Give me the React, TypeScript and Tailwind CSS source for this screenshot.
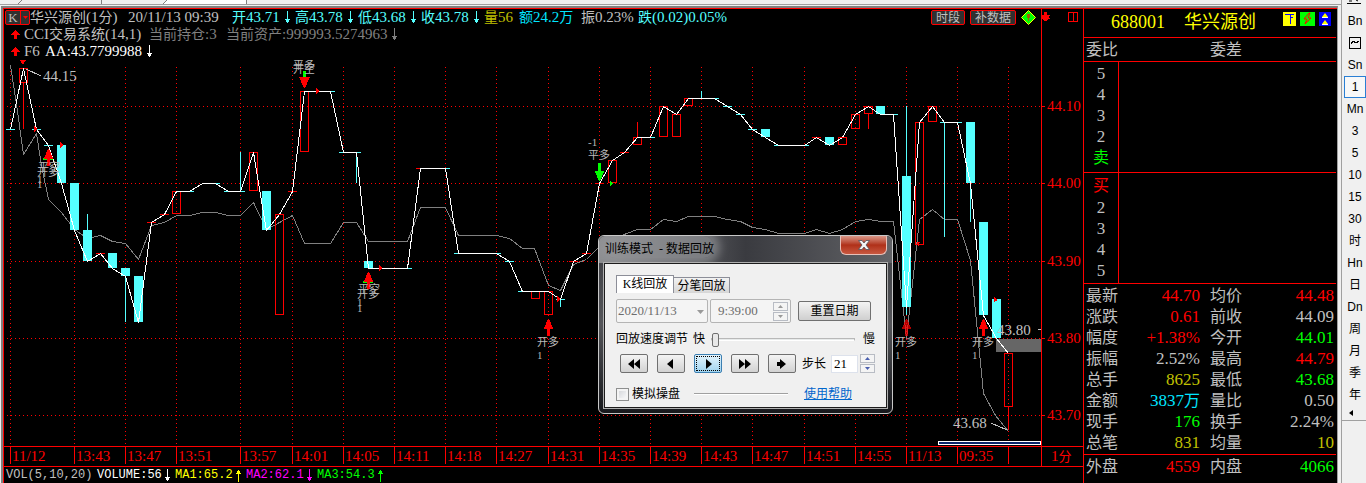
import React, { useState } from 'react';

const TIME_TICKS: [number, string][] = [
    [0, '11/12'], [5, '13:43'], [9, '13:47'], [13, '13:51'], [18, '13:57'],
    [22, '14:01'], [26, '14:05'], [30, '14:11'], [34, '14:18'], [38, '14:27'],
    [42, '14:31'], [46, '14:35'], [50, '14:39'], [54, '14:43'], [58, '14:47'],
    [62, '14:51'], [66, '14:55'], [70, '11/13'], [74, '09:35'], [78, ''],
];

const PRICE_TICKS: [number, string][] = [
    [106, '44.10'], [183, '44.00'], [261, '43.90'], [338, '43.80'], [415, '43.70'],
];

// close line, one y per bar
const CLOSES = [
    129, 68, 129, 145, 183, 230, 261, 253, 268, 276, 322, 222, 214, 191, 191, 183, 183, 191, 191, 152,
    230, 214, 191, 91, 91, 91, 152, 152, 268, 268, 268, 268, 168, 168, 168, 253, 253, 253, 253, 261,
    291, 291, 291, 299, 261, 253, 183, 160, 152, 137, 137, 106, 114, 98, 98, 98, 106, 114, 129, 137,
    145, 145, 145, 137, 145, 137, 114, 106, 114, 114, 307, 122, 106, 122, 122, 183, 315, 338, 353,
];

const AVERAGE: [number, number][] = [
    [10, 65], [16, 104], [23, 154], [36, 133], [41, 165], [48, 199], [61, 212], [74, 229], [87, 238], [100, 235],
    [112, 241], [125, 243], [138, 259], [151, 225], [164, 222], [176, 215], [189, 215], [202, 212], [215, 212],
    [228, 215], [240, 215], [253, 202], [266, 229], [279, 222], [292, 215], [304, 243], [330, 243], [343, 222],
    [356, 222], [368, 241], [407, 241], [420, 207], [445, 207], [458, 235], [496, 235], [509, 238], [522, 248],
    [534, 248], [548, 285], [560, 290], [573, 264], [586, 259], [599, 246], [612, 240], [626, 233], [637, 229],
    [650, 229], [663, 219], [676, 221], [688, 216], [714, 216], [727, 219], [740, 221], [752, 227], [765, 229],
    [778, 233], [804, 233], [816, 229], [829, 233], [842, 229], [855, 221], [868, 219], [881, 221], [893, 221],
    [906, 338], [919, 219], [932, 209], [944, 219], [957, 219], [970, 260], [983, 393], [995, 415], [1008, 431],
];

// bar index, body top, body bottom, wick top, wick bottom
type Bar = [number, number, number, number, number];

const UP_BARS: Bar[] = [
    [1, 68, 82, 68, 129], [13, 191, 213, 191, 213], [19, 152, 190, 152, 190], [21, 214, 314, 214, 314],
    [23, 91, 151, 91, 151], [41, 291, 298, 291, 298], [42, 291, 314, 291, 314], [47, 160, 182, 160, 182],
    [49, 137, 144, 122, 144], [51, 106, 136, 106, 136], [52, 114, 136, 114, 136], [53, 98, 105, 98, 105],
    [65, 137, 144, 137, 144], [66, 114, 128, 114, 128], [67, 106, 113, 106, 129], [71, 122, 244, 122, 244],
    [72, 106, 121, 106, 121], [78, 353, 406, 353, 430],
];

const DOWN_BARS: Bar[] = [
    [4, 145, 183, 145, 183], [5, 183, 230, 183, 230], [6, 230, 261, 214, 261], [8, 253, 268, 253, 268],
    [9, 268, 276, 268, 322], [10, 276, 322, 276, 322], [20, 191, 230, 191, 230], [28, 261, 268, 261, 268],
    [59, 129, 137, 129, 137], [64, 137, 145, 137, 145], [68, 106, 114, 106, 114], [70, 176, 307, 106, 315],
    [75, 122, 183, 122, 222], [76, 222, 315, 222, 315], [77, 299, 338, 299, 338],
];

const UP_DASHES: [number, number][] = [
    [7, 253], [11, 222], [12, 214], [22, 191], [32, 168], [44, 261], [45, 253], [46, 183], [48, 152], [63, 137],
];

const DOWN_DASHES: [number, number][] = [
    [0, 129], [2, 129], [3, 145], [14, 191], [16, 183], [17, 191], [18, 191], [25, 91], [26, 152], [27, 152],
    [31, 268], [34, 168], [35, 253], [38, 253], [39, 261], [40, 291], [43, 299], [50, 137], [55, 98], [56, 106],
    [57, 114], [58, 129], [60, 145], [62, 145], [69, 114], [73, 122], [74, 122],
];

// bar index, from, to
const WICKS: [number, number, number][] = [
    [18, 152, 191], [27, 152, 183], [43, 299, 307], [54, 91, 98], [73, 122, 237],
];

const NOTES: [number, number, string][] = [
    [38, 171, '平空'], [37, 176, '开多'], [37, 183, '1'], [37, 188, '1'],
    [293, 69, '平多'], [293, 73, '开空'],
    [358, 293, '平空'], [357, 298, '开多'], [357, 306, '1'], [357, 312, '1'],
    [537, 346, '开多'], [537, 359, '1'],
    [588, 146, '-1'], [588, 159, '平多'],
    [895, 346, '开多'], [895, 359, '1'],
    [972, 346, '开多'], [972, 359, '1'],
];

const STATS = [
    ['最新', '44.70', 'text-[#ff0000]', '均价', '44.48', 'text-[#ff0000]'],
    ['涨跌', '0.61', 'text-[#ff0000]', '前收', '44.09', 'text-[#c0c0c0]'],
    ['幅度', '+1.38%', 'text-[#ff0000]', '今开', '44.01', 'text-[#00ff00]'],
    ['振幅', '2.52%', 'text-[#c0c0c0]', '最高', '44.79', 'text-[#ff0000]'],
    ['总手', '8625', 'text-[#c0c000]', '最低', '43.68', 'text-[#00ff00]'],
    ['金额', '3837万', 'text-[#00e5ff]', '量比', '0.50', 'text-[#c0c0c0]'],
    ['现手', '176', 'text-[#00ff00]', '换手', '2.24%', 'text-[#c0c0c0]'],
    ['总笔', '831', 'text-[#c0c000]', '均量', '10', 'text-[#c0c000]'],
];

const PERIODS = ['Bn', 'wave', 'Sn', '1', 'Mn', '3', '5', '10', '15', '30', '时', 'Hn', '日', 'Dn', '周', '月', '季', '年'];

const barX = (i: number) => Math.round(10 + i * 12.8);

const Arrow: React.FC<{ up?: boolean }> = ({ up }) => (
    <svg width="7" height="13" viewBox="0 0 7 13" className={up ? 'shrink-0' : 'shrink-0 rotate-180'} shapeRendering="crispEdges">
        <path d="M3 1h1v12h-1zM2 2h3v2h-3zM1 4h5v1h-5z" fill="currentColor" />
    </svg>
);

const RedArrow = () => (
    <svg width="9" height="9" viewBox="0 0 9 9" className="ml-[7px] mr-1 shrink-0" shapeRendering="crispEdges">
        <path d="M4 0h1v1h1v1h1v1h1v1h1v1H6v4H3V5H0V4h1V3h1V2h1V1h1z" fill="#f00" />
    </svg>
);

// Chinese label at 14px followed by a number at 15px
const Pair: React.FC<{ label: string; value: string; className: string; arrow?: boolean }> = ({ label, value, className, arrow }) => (
    <span className={`flex items-center shrink-0 whitespace-nowrap ${className}`}>
        <span className="text-sm leading-4">{label}</span>
        <span>{value}</span>
        {arrow && <span className="ml-1 flex"><Arrow /></span>}
    </span>
);

const MarkUp: React.FC<{ x: number; y: number }> = ({ x, y }) => (
    <path d={`M${x} ${y}h1l4 9v1h-3v7h-3v-7h-3v-1z`} fill="#f00" />
);

const ChartHeader = () => (
    <div className="flex text-[15px] leading-[17px]">
        <div className="flex-1 min-w-0 border-r border-[#f00]">
            <div className="flex h-[17px] items-center">
                <button aria-label="K线菜单" className="ml-px flex h-[15px] w-[25px] shrink-0 items-center rounded-xs border border-[#f00] bg-[#303030] text-[13px] leading-3 text-[#c0c0c0]">
                    <span className="flex-1">K</span>
                    <span className="flex h-full w-[9px] items-center justify-center border-l border-[#f00]">
                        <svg width="5" height="3" viewBox="0 0 5 3"><path d="M0 0h5L2.500 3z" fill="#f00" /></svg>
                    </span>
                </button>
                <span className="w-[98px] shrink-0 whitespace-nowrap text-[#c0c0c0]"><span className="text-sm leading-4">华兴源创</span>(1<span className="text-sm leading-4">分</span>)</span>
                <span className="w-[104px] shrink-0 whitespace-nowrap text-[#c0c0c0]">20/11/13 09:39</span>
                <Pair label="开" value="43.71" className="w-[63px] text-[#55ffff]" arrow />
                <Pair label="高" value="43.78" className="w-[63px] text-[#55ffff]" arrow />
                <Pair label="低" value="43.68" className="w-[63px] text-[#55ffff]" arrow />
                <Pair label="收" value="43.78" className="w-[63px] text-[#55ffff]" arrow />
                <Pair label="量" value="56" className="w-[35px] text-[#c0c000]" />
                <span className="w-[62px] shrink-0 whitespace-nowrap text-[#00e5ff]"><span className="text-sm leading-4">额</span>24.2<span className="text-sm leading-4">万</span></span>
                <Pair label="振" value="0.23%" className="w-[57px] text-[#c0c0c0]" />
                <Pair label="跌" value="(0.02)0.05%" className="text-[#55ffff]" />
                <div className="ml-auto flex items-center gap-[5px] pr-[5px]">
                    <button className="h-[15px] w-[34px] rounded-xs border border-[#f00] bg-[#303030] text-xs leading-3 whitespace-nowrap text-[#c0c0c0]">时段</button>
                    <button className="h-[15px] w-[46px] rounded-xs border border-[#f00] bg-[#303030] text-xs leading-3 whitespace-nowrap text-[#c0c0c0]">补数据</button>
                    <svg width="15" height="15" viewBox="0 0 15 15">
                        <path d="M7.500 0.500l7 7-7 7-7-7z" fill="#0f0" stroke="#ff0" />
                        <path d="M6 4h3v4h-1v3h-1V8H6z" fill="#a06000" />
                    </svg>
                </div>
            </div>
            <div className="flex h-[17px] items-center text-[#c0c0c0]">
                <RedArrow />
                <span className="w-[125px] shrink-0 whitespace-nowrap">CCI<span className="text-sm leading-4">交易系统</span>(14,1)</span>
                <span className="w-[77px] shrink-0 whitespace-nowrap text-[#808080]"><span className="text-sm leading-4">当前持仓</span>:3</span>
                <span className="flex items-center gap-1 whitespace-nowrap text-[#808080]"><span><span className="text-sm leading-4">当前资产</span>:999993.5274963</span><Arrow /></span>
            </div>
            <div className="flex h-[17px] items-center text-[#c0c0c0]">
                <RedArrow />
                <span className="w-[21px]">F6</span>
                <span className="flex items-center gap-1 text-white">AA:43.7799988<Arrow /></span>
            </div>
        </div>
        <div className="flex w-[41px] items-start justify-between pt-[3px] pr-[5px]">
            <svg width="8" height="9" viewBox="0 0 8 9" shapeRendering="crispEdges">
                <path d="M2 0h3v3h3v1h-1v2h1v1H6v1H5v1H2V8H1V7H0V3h2z" fill="#f00" />
            </svg>
            <svg width="10" height="10" viewBox="0 0 10 10" fill="none" stroke="#f00" shapeRendering="crispEdges">
                <path d="M0.500 0.500h9v9h-9zM5.500 0.500v9" />
            </svg>
        </div>
    </div>
);

const Chart = () => (
    <svg viewBox="4 60 1079 407" className="block h-auto w-full" role="img" aria-label="K线图">
        <g shapeRendering="crispEdges" fill="none">
            {TIME_TICKS.map(([i]) => (
                <path key={i} d={`M${barX(i) + 0.5} 67V446`} stroke="#f00" strokeDasharray="1 3" />
            ))}
            {PRICE_TICKS.map(([y]) => (
                <path key={y} d={`M7 ${y + 0.5}H1041`} stroke="#f00" strokeDasharray="1 3" />
            ))}
            <rect x="996" y="339" width="45" height="13" fill="#666" />
            <polyline points={AVERAGE.map(([x, y]) => `${x + 0.5},${y + 0.5}`).join(' ')} stroke="#808080" />
            {UP_BARS.map(([i, top, bottom, high, low]) => (
                <g key={i} stroke="#f00">
                    <rect x={barX(i) - 3.5} y={top + 0.5} width="8" height={bottom - top} />
                    {high < top && <path d={`M${barX(i) + 0.5} ${high}V${top}`} />}
                    {low > bottom && <path d={`M${barX(i) + 0.5} ${bottom}V${low}`} />}
                </g>
            ))}
            {DOWN_BARS.map(([i, top, bottom, high, low]) => (
                <g key={i} fill="#55ffff">
                    <rect x={barX(i) - 4} y={top} width="9" height={bottom - top} />
                    <rect x={barX(i)} y={high} width="1" height={low - high} />
                </g>
            ))}
            {UP_DASHES.map(([i, y]) => <rect key={i} x={barX(i) - 4} y={y} width="9" height="1" fill="#f00" />)}
            {DOWN_DASHES.map(([i, y]) => <rect key={i} x={barX(i) - 4} y={y} width="9" height="1" fill="#55ffff" />)}
            {WICKS.map(([i, from, to]) => <rect key={i} x={barX(i)} y={from} width="1" height={to - from} fill="#55ffff" />)}
            <polyline points={CLOSES.map((y, i) => `${barX(i) + 0.5},${y + 0.5}`).join(' ')} stroke="#fff" />

            {/* signals */}
            <path d="M20 60h6l-3 5z M34 126l3 3-3 3z M60 142l3 3-3 3z M316 88l3 3-3 3z M379 265l3 3-3 3z M917 242h3l-2 5z M994 297l4 3-4 2z M557 296l3 3-3 3z" fill="#f00" />
            <path d="M43 158h10v2h-10z M363 281h10v2h-10z M303 71h3v6h-3z M598 163h3v8h3v1l-4 9h-1l-4-9v-1h3z M610 181l3 2-3 3z" fill="#0f0" />
            <MarkUp x={48} y={149} />
            <MarkUp x={368} y={272} />
            <MarkUp x={548} y={319} />
            <g opacity="0.7"><MarkUp x={906} y={319} /></g>
            <MarkUp x={983} y={319} />
            <path d="M299 77h11l-5 11h-1z" fill="#f00" />

            {/* leaders and scroll bar */}
            <path d="M26 69l15 7M991 423l16 7M1038 329.500h3" stroke="#c0c0c0" />
            <rect x="938.500" y="441.500" width="102" height="3" fill="#0a246a" stroke="#fff" />

            {/* frame */}
            <path d="M1041.500 60V466M4 446.500H1083M4 466.500H1083" stroke="#f00" />
            {PRICE_TICKS.map(([y]) => <path key={y} d={`M1041 ${y + 0.5}h4`} stroke="#f00" />)}
            {TIME_TICKS.map(([i]) => <path key={i} d={`M${barX(i) + 0.5} 446v18`} stroke="#f00" />)}
        </g>
        <g fill="#ff0000" fontSize="15">
            {PRICE_TICKS.map(([y, label]) => <text key={y} x="1047" y={y + 5}>{label}</text>)}
            {TIME_TICKS.map(([i, label]) => <text key={i} x={barX(i) + 2} y="461">{label}</text>)}
            <text x="1051" y="461">1<tspan fontSize="13">分</tspan></text>
        </g>
        <g fill="#c0c0c0" fontSize="15">
            <text x="43" y="81">44.15</text>
            <text x="997" y="335">43.80</text>
            <text x="953" y="428">43.68</text>
        </g>
        <g fill="#b8b8b8" fontSize="11">
            {NOTES.map(([x, y, label]) => <text key={`${x}-${y}`} x={x} y={y}>{label}</text>)}
        </g>
    </svg>
);

const VolumeLegend = () => (
    <div className="flex h-4 items-center gap-1 overflow-hidden pl-0.5 font-['Liberation_Mono',monospace] text-xs leading-4 whitespace-nowrap">
        <span className="w-[87px] text-[#c0c0c0]">VOL(5,10,20)</span>
        <span className="flex w-[74px] items-center justify-between text-white">VOLUME:56<Arrow /></span>
        <span className="flex w-[67px] items-center justify-between text-[#ffff00]">MA1:65.2<Arrow up /></span>
        <span className="flex w-[67px] items-center justify-between text-[#ff00ff]">MA2:62.1<Arrow /></span>
        <span className="flex w-[67px] items-center justify-between text-[#00ff00]">MA3:54.3<Arrow up /></span>
    </div>
);

const Levels: React.FC<{ rows: string[]; className: string }> = ({ rows, className }) => (
    <div className={`flex border-b border-[#f00] ${className}`}>
        <div className="-my-1 flex w-[35px] flex-col items-center border-r border-[#f00] py-1 text-[#c0c0c0]">
            {rows.map((row) => {
                if (row === '卖') return <span key={row} className="h-[21px] text-base leading-[21px] text-[#00ff00]">{row}</span>;
                if (row === '买') return <span key={row} className="h-[23px] text-base leading-[23px] text-[#ff0000]">{row}</span>;
                return <span key={row} className="h-[21px] leading-[21px]">{row}</span>;
            })}
        </div>
    </div>
);

const QuotePanel = () => (
    <section className="w-[254px] shrink-0 border-l border-[#f00] pr-px text-[17px]">
        <div className="flex h-[29px] items-center border-b border-[#f00] pl-[27px] text-lg leading-6 text-[#ffff00]">
            <span className="w-[73px] pb-0.5">688001</span>
            <span className="pb-0.5">华兴源创</span>
            <div className="ml-auto flex items-center gap-1 pr-[5px] pb-2">
                <svg width="13" height="14" viewBox="0 0 13 14" shapeRendering="crispEdges">
                    <path d="M0 0h13v14H0z" fill="#ff0" />
                    <path d="M2 2.500h9M7.500 3v9M8 5.500h2" stroke="#00f" fill="none" />
                </svg>
                <svg width="15" height="14" viewBox="0 0 15 14">
                    <path d="M0 0h15v14H0z" fill="#0f0" />
                    <path d="M9 1L4 7h3l-2 5 6-6H8l2-5z" fill="#0f0" stroke="#f00" />
                </svg>
                <svg width="12" height="14" viewBox="0 0 12 14">
                    <path d="M0 0h12v14H0z" fill="#00f" />
                    <path d="M6 1l3 4H3zM6 8l3 4H3z" fill="#ff0" />
                    <path d="M3 5.500h6M3 12.500h6" stroke="#fff" />
                </svg>
            </div>
        </div>
        <div className="flex h-6 items-center border-b border-[#f00] pl-0.5 text-base leading-5 text-[#c0c0c0]">
            <span className="w-[124px]">委比</span>
            <span>委差</span>
        </div>
        <Levels rows={['5', '4', '3', '2', '卖']} className="h-[111px] overflow-hidden pt-px" />
        <Levels rows={['买', '2', '3', '4', '5']} className="h-[111px] overflow-hidden pt-px" />
        <table className="mt-px w-full table-fixed">
            <tbody>
                {STATS.map(([label, value, color, label2, value2, color2]) => (
                    <tr key={label} className="h-[21px] leading-5 text-[#c0c0c0]">
                        <th scope="row" className="w-9 p-0 pl-0.5 text-left text-base leading-5 font-normal">{label}</th>
                        <td className={`w-20 p-0 text-right ${color}`}>
                            {value.replace('万', '')}
                            {value.endsWith('万') && <span className="text-base leading-5">万</span>}
                        </td>
                        <th scope="row" className="w-[46px] p-0 pl-2.5 text-left text-base leading-5 font-normal">{label2}</th>
                        <td className={`p-0 pr-0.5 text-right ${color2}`}>{value2}</td>
                    </tr>
                ))}
            </tbody>
        </table>
        <div className="mt-px flex h-6 items-center border-t border-[#f00] pt-px pr-0.5 pl-0.5 leading-5 text-[#c0c0c0]">
            <span className="text-base">外盘</span>
            <span className="w-[82px] text-right text-[#ff0000]">4559</span>
            <span className="pl-2.5 text-base">内盘</span>
            <span className="ml-auto text-[#00ff00]">4066</span>
        </div>
    </section>
);

const PeriodBar: React.FC = () => {
    const [active, setActive] = useState('1');

    return (
        <nav className="flex w-[25px] shrink-0 flex-col border-l border-[#a0a0a0] bg-[#f0f0f0] font-['Liberation_Sans','Noto_Sans_CJK_SC',sans-serif] text-black">
            <div className="flex h-2.5 justify-center">
                <svg width="14" height="4" viewBox="0 0 14 4"><path d="M0 3.500h14M2 1h3M9 0l2 1" stroke="#000" /></svg>
            </div>
            {PERIODS.map((item) => (
                <button
                    key={item}
                    onClick={() => setActive(item)}
                    aria-label={item}
                    className={`flex h-[22px] w-[22px] items-center justify-center self-end border text-xs leading-4 ${active === item ? 'border-[#2a7fd4] bg-[#f8f8f8]' : 'border-transparent'}`}
                >
                    {item === 'wave' ? (
                        <svg width="12" height="12" viewBox="0 0 12 12" fill="none" stroke="#000" shapeRendering="crispEdges">
                            <path d="M0.500 0.500h11v11h-11z" />
                            <path d="M2 7l2-3 3 2 3-2" strokeWidth="1" />
                        </svg>
                    ) : item}
                </button>
            ))}
            <button aria-label="收起" className="flex h-[14px] items-center pl-[7px]">
                <svg width="4" height="6" viewBox="0 0 4 6"><path d="M4 0v6L0 3z" fill="#000" /></svg>
            </button>
            <div className="flex-1 border-t border-[#a0a0a0]" />
        </nav>
    );
};

const Spinner: React.FC<{ disabled?: boolean }> = ({ disabled }) => (
    <span className={`flex w-[15px] shrink-0 flex-col gap-px ${disabled ? 'text-[#999]' : 'text-[#4a5fae]'}`}>
        {['增加', '减少'].map((label, i) => (
            <button key={label} disabled={disabled} aria-label={label} className="flex h-[9px] items-center justify-center border border-[#b8bcc4] bg-[#f4f4f4]">
                <svg width="5" height="3" viewBox="0 0 5 3"><path d={i === 0 ? 'M0 3h5L2.500 0z' : 'M0 0h5L2.500 3z'} fill="currentColor" /></svg>
            </button>
        ))}
    </span>
);

const PLAYER: [string, string][] = [
    ['快退', 'M6 0v10L0 5zM12 0v10L6 5z'],
    ['后退', 'M8 0v10L2 5z'],
    ['播放', 'M4 0v10l6-5z'],
    ['快进', 'M0 0v10l6-5zM6 0v10l6-5z'],
    ['单步', 'M1 3h3V0l6 5-6 5V7H1z'],
];

const ReplayDialog: React.FC = () => {
    const [speed, setSpeed] = useState(0);
    const [step, setStep] = useState('21');
    const [simulate, setSimulate] = useState(false);

    return (
        <div role="dialog" aria-label="训练模式 - 数据回放" className="absolute top-[235px] left-[598px] w-[295px] rounded-md border border-[#c8c8c8] bg-linear-to-b from-[#3c3d42] via-[#55565a] to-[#17181c] p-[5px] pt-0 font-['Liberation_Serif','Noto_Sans_CJK_SC',serif] text-[13px] text-black">
            <div className="-mx-[5px] flex h-[27px] items-start justify-between overflow-hidden rounded-t-md bg-linear-to-r from-[#8c8d90] via-[#3a3b40] to-[#626367] pr-[5px] pl-1.5">
                <h2 className="rounded-full bg-[#9a9b9e]/60 pt-1 text-xs leading-[18px] shadow-[0_0_8px_6px_rgba(154,155,158,0.6)]">训练模式&nbsp; - 数据回放</h2>
                <button aria-label="关闭" className="flex h-[19px] w-[47px] items-center justify-center rounded-b-md border border-t-0 border-[#e8c0b8] bg-linear-to-b from-[#d99586] via-[#b03018] to-[#c85840]">
                    <svg width="12" height="10" viewBox="0 0 12 10">
                        <path d="M0.500 0.500h3.500l2 2.500 2-2.500h3.500L8 5l3.500 4.500H8L6 7 4 9.500H0.500L4 5z" fill="#f4f4f4" stroke="#50505c" strokeWidth="0.800" />
                    </svg>
                </button>
            </div>
            <div className="border border-[#1c1c1c] bg-[#f0f0f0] px-[11px] pt-[11px] pb-[3px] outline outline-[#b0b0b0]">
                <div role="tablist" className="flex h-[18px] items-end text-xs">
                    <button role="tab" aria-selected="true" className="h-[18px] w-[58px] border border-b-0 border-[#8c8e98] bg-white leading-[17px] whitespace-nowrap">K线回放</button>
                    <button role="tab" aria-selected="false" className="h-4 w-[56px] border border-b-0 border-l-0 border-[#8c8e98] bg-linear-to-b from-[#f2f2f2] to-[#d6d6d6] leading-4 whitespace-nowrap">分笔回放</button>
                </div>
                <div className="mt-1.5 flex h-6 items-center gap-0.5">
                    <div className="relative">
                        <select disabled aria-label="日期" className="h-6 w-[92px] appearance-none rounded-xs border border-[#b4b4b4] bg-[#f4f4f4] pl-px text-[#6d6d6d] opacity-100">
                            <option>2020/11/13</option>
                        </select>
                        <svg width="7" height="4" viewBox="0 0 7 4" className="absolute top-[11px] right-1"><path d="M0 0h7L3.500 4z" fill="#999" /></svg>
                    </div>
                    <div className="flex h-6 w-[81px] items-center rounded-xs border border-[#b4b4b4] bg-[#f4f4f4] pr-0.5">
                        <input disabled aria-label="时间" value="9:39:00" readOnly className="w-0 flex-1 pl-[7px] text-[#6d6d6d]" />
                        <Spinner disabled />
                    </div>
                    <button className="ml-[5px] h-5 w-[73px] rounded-xs border border-[#707070] bg-linear-to-b from-[#f4f4f4] to-[#cfcfcf] text-xs leading-[18px] whitespace-nowrap">重置日期</button>
                </div>
                <div className="mt-[7px] flex h-[18px] items-center text-xs leading-[18px] whitespace-nowrap">
                    <label htmlFor="speed" className="w-[77px]">回放速度调节</label>
                    <span>快</span>
                    <input
                        id="speed"
                        type="range"
                        min={0}
                        max={100}
                        value={speed}
                        onChange={(e) => setSpeed(Number(e.target.value))}
                        className="mr-2 ml-1.5 h-4 w-0 flex-1 appearance-none bg-transparent [&::-webkit-slider-runnable-track]:h-[3px] [&::-webkit-slider-runnable-track]:border [&::-webkit-slider-runnable-track]:border-[#b8b8b8] [&::-webkit-slider-runnable-track]:border-b-white [&::-webkit-slider-runnable-track]:bg-[#e7eaea] [&::-webkit-slider-thumb]:-mt-[6px] [&::-webkit-slider-thumb]:h-[14px] [&::-webkit-slider-thumb]:w-[7px] [&::-webkit-slider-thumb]:appearance-none [&::-webkit-slider-thumb]:rounded-xs [&::-webkit-slider-thumb]:border [&::-webkit-slider-thumb]:border-[#707070] [&::-webkit-slider-thumb]:bg-[#e8e8e8]"
                    />
                    <span>慢</span>
                </div>
                <div className="mt-[5px] flex h-[21px] items-center gap-1.5 pl-1">
                    <div className="flex gap-[9px]">
                        {PLAYER.map(([label, path]) => (
                            <button
                                key={label}
                                aria-label={label}
                                className={`flex h-[19px] w-7 shrink-0 items-center justify-center rounded-xs border ${label === '播放' ? 'border-[#3c7fb1] bg-linear-to-b from-[#e4f4fc] to-[#a0d4f0] outline-1 -outline-offset-3 outline-dotted outline-black' : 'border-[#707070] bg-linear-to-b from-[#f4f4f4] to-[#d2d2d2]'}`}
                            >
                                <svg width="12" height="10" viewBox="0 0 12 10"><path d={path} fill="#000" /></svg>
                            </button>
                        ))}
                    </div>
                    <div className="flex items-center">
                        <label htmlFor="step" className="w-[29px] text-xs whitespace-nowrap">步长</label>
                        <input id="step" value={step} onChange={(e) => setStep(e.target.value)} className="mr-0.5 h-[18px] w-[27px] border border-[#dde2ec] bg-white pl-0.5" />
                        <Spinner />
                    </div>
                </div>
                <div className="mt-2.5 flex h-5 items-center text-xs leading-5 whitespace-nowrap">
                    <label className="flex items-center gap-[3px]">
                        <input
                            type="checkbox"
                            checked={simulate}
                            onChange={(e) => setSimulate(e.target.checked)}
                            className="h-[13px] w-[13px] appearance-none border border-[#8e8f8f] bg-linear-to-br from-[#cfd1d5] to-white shadow-[inset_0_0_0_2px_#f4f4f4] checked:bg-[#4a5fae]"
                        />
                        模拟操盘
                    </label>
                    <hr className="mr-4 ml-[14px] flex-1 border-t border-b border-t-[#a0a0a0] border-b-white" />
                    <a href="#help" className="mr-[23px] text-[#0066cc] underline">使用帮助</a>
                </div>
            </div>
        </div>
    );
};

export default function App() {
    return (
        <div className="relative flex min-h-screen bg-[#f0f0f0] font-['Liberation_Serif','Noto_Sans_CJK_SC',serif]">
            <div className="flex min-w-0 flex-1 flex-col pr-[3px]">
                {/* Tab strip */}
                <div className="-mr-[3px] h-[5px] border-b border-[#a0a0a0]">
                    <svg width="250" height="4" viewBox="0 0 250 4" className="block">
                        <path d="M163 4l4-4h79v4z" fill="#fff" />
                        <path d="M18 4l4-4M101.500 0v4M163 4l4-4M246.500 0v4" stroke="#808080" fill="none" />
                    </svg>
                </div>
                <div className="ml-px mt-px flex flex-1 border-t-2 border-r border-l-2 border-t-[#808080] border-r-[#a0a0a0] border-l-[#808080] bg-black">
                    <main className="min-w-0 flex-1 border-t border-l border-[#f00]">
                        <ChartHeader />
                        <Chart />
                        <VolumeLegend />
                    </main>
                    <div className="flex border-t border-[#f00]">
                        <QuotePanel />
                    </div>
                </div>
            </div>
            <PeriodBar />
            <ReplayDialog />
        </div>
    );
}
